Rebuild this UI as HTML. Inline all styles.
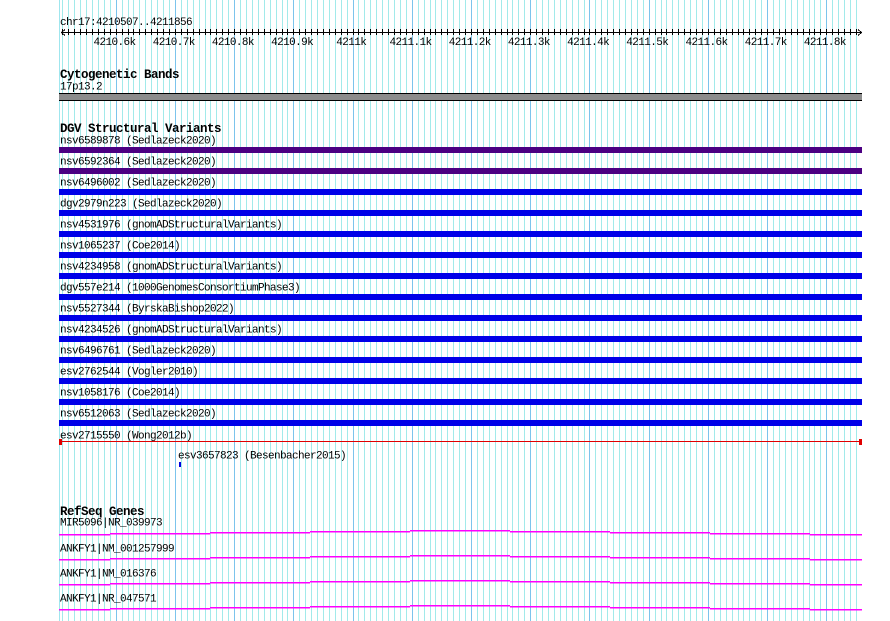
<!DOCTYPE html>
<html><head><meta charset="utf-8"><style>
html,body{margin:0;padding:0;background:#fff;width:890px;height:621px;overflow:hidden}
svg{display:block}
text{font-family:"Liberation Mono",monospace;font-size:11px;letter-spacing:-0.6px;fill:#000}
.h{font-weight:bold;font-size:12.5px;letter-spacing:-0.5px}
</style></head><body>
<svg id="s" width="890" height="621" xmlns="http://www.w3.org/2000/svg" shape-rendering="crispEdges">
<g id="grid"></g>
<g id="ruler" stroke="#000" stroke-width="1"></g>
<text x="60" y="25">chr17:4210507..4211856</text>
<g id="tl"></g>
<text class="h" x="60" y="78">Cytogenetic Bands</text>
<text x="60" y="89.5">17p13.2</text>
<rect x="59" y="93" width="803" height="8" fill="#000"/>
<rect x="59" y="94" width="803" height="6" fill="#8c8c8c"/>
<text class="h" x="60" y="132">DGV Structural Variants</text>
<g id="dgv"></g>
<text x="60" y="438.5">esv2715550 (Wong2012b)</text>
<rect x="59" y="441" width="803" height="1" fill="#e00000"/>
<rect x="59" y="439" width="3" height="6" fill="#e00000"/>
<rect x="859" y="439" width="3" height="6" fill="#e00000"/>
<text x="178" y="458.5">esv3657823 (Besenbacher2015)</text>
<rect x="179" y="462" width="2" height="5" fill="#0000e0"/>
<text class="h" x="60" y="515">RefSeq Genes</text>
<text x="60" y="525.5">MIR5096|NR_039973</text>
<text x="60" y="551.5">ANKFY1|NM_001257999</text>
<text x="60" y="576.5">ANKFY1|NM_016376</text>
<text x="60" y="601.5">ANKFY1|NR_047571</text>
<g id="genes" fill="#ff00ff"></g>
</svg>
<script>
var NS="http://www.w3.org/2000/svg";
function el(p,t,a){var e=document.createElementNS(NS,t);for(var k in a)e.setAttribute(k,a[k]);document.getElementById(p).appendChild(e);return e;}
el("grid","rect",{x:59,y:0,width:1,height:621,fill:"#9fe6ee"});
for(var k=0;k<=134;k++){
 var x=Math.round(62.4+k*5.922);
 var major=((k+1)%10==0);
 el("grid","rect",{x:x,y:0,width:1,height:621,fill:major?"#7cc4ec":"#a2eaea"});
 el("ruler","line",{x1:x+0.5,y1:29,x2:x+0.5,y2:35});
}
el("ruler","line",{x1:61,y1:32.5,x2:862,y2:32.5});
el("ruler","polyline",{points:"65,29.5 61.5,32.5 65,35.5",fill:"none"});
el("ruler","polyline",{points:"858,29.5 861.5,32.5 858,35.5",fill:"none"});
var labs=["4210.6k","4210.7k","4210.8k","4210.9k","4211k","4211.1k","4211.2k","4211.3k","4211.4k","4211.5k","4211.6k","4211.7k","4211.8k"];
for(var i=0;i<labs.length;i++){
 var cx=114.5+i*59.2;
 var t=el("tl","text",{x:cx,y:45,"text-anchor":"middle"});t.textContent=labs[i];
}
var names=["nsv6589878 (Sedlazeck2020)","nsv6592364 (Sedlazeck2020)","nsv6496002 (Sedlazeck2020)","dgv2979n223 (Sedlazeck2020)","nsv4531976 (gnomADStructuralVariants)","nsv1065237 (Coe2014)","nsv4234958 (gnomADStructuralVariants)","dgv557e214 (1000GenomesConsortiumPhase3)","nsv5527344 (ByrskaBishop2022)","nsv4234526 (gnomADStructuralVariants)","nsv6496761 (Sedlazeck2020)","esv2762544 (Vogler2010)","nsv1058176 (Coe2014)","nsv6512063 (Sedlazeck2020)"];
for(var i=0;i<names.length;i++){
 var t=el("dgv","text",{x:60,y:143.5+21*i});t.textContent=names[i];
 el("dgv","rect",{x:59,y:147+21*i,width:803,height:6,fill:i<2?"#4b0082":"#0000e8"});
}
var segs=[[59,110,4],[110,210,3],[210,310,2],[310,410,1],[410,510,0],[510,610,1],[610,710,2],[710,810,3],[810,862,4]];
for(var g=0;g<4;g++){
 var base=530+25*g;
 for(var j=0;j<segs.length;j++){
  el("genes","rect",{x:segs[j][0],y:base+segs[j][2],width:segs[j][1]-segs[j][0],height:1.5});
 }
}
</script>
</body></html>
